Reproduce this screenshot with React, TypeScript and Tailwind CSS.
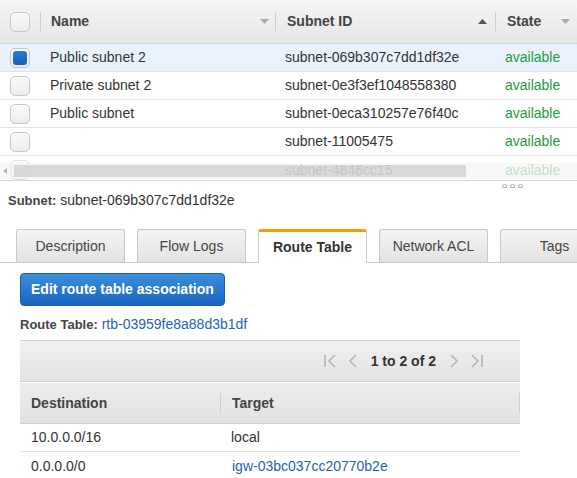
import React from "react";

const font = { fontFamily: '"Liberation Sans", Arial, sans-serif' };

function Checkbox({ checked }: { checked?: boolean }) {
  return (
    <div className="w-[20px] h-[20px] rounded-[5px] border border-[#c6c6c6] bg-gradient-to-b from-[#fbfbfb] to-[#ececec] flex items-center justify-center">
      {checked && <div className="w-[14px] h-[14px] rounded-[3px] bg-gradient-to-b from-[#2b7bd6] to-[#1560b8]" />}
    </div>
  );
}

const subnets = [
  { name: "Public subnet 2", id: "subnet-069b307c7dd1df32e", checked: true },
  { name: "Private subnet 2", id: "subnet-0e3f3ef1048558380" },
  { name: "Public subnet", id: "subnet-0eca310257e76f40c" },
  { name: "", id: "subnet-11005475" },
];

function HeaderDivider() {
  return <div className="w-px h-[20px] bg-[#d0d0d0]" />;
}

function Caret({ up }: { up?: boolean }) {
  return (
    <svg width="9" height="5" viewBox="0 0 9 5">
      {up ? <path d="M0 5 L4.5 0 L9 5 Z" fill="#555" /> : <path d="M0 0 L9 0 L4.5 5 Z" fill="#aaa" />}
    </svg>
  );
}

function TopTable() {
  return (
    <div className="relative h-[181px] overflow-hidden border-b border-[#d5d5d5]">
      <div className="h-[44px] flex items-center bg-gradient-to-b from-[#f6f6f6] to-[#e6e6e6] border-b border-[#d2d2d2] text-[14px] font-bold text-[#444]">
        <div className="w-[40px] flex items-center pl-[10px] h-full">
          <Checkbox />
        </div>
        <HeaderDivider />
        <div className="w-[234px] flex items-center justify-between pl-[10px] pr-[6px]">
          <span>Name</span>
          <Caret />
        </div>
        <HeaderDivider />
        <div className="w-[219px] flex items-center justify-between pl-[11px] pr-[8px]">
          <span>Subnet ID</span>
          <Caret up />
        </div>
        <HeaderDivider />
        <div className="flex-1 flex items-center justify-between pl-[11px] pr-[7px]">
          <span>State</span>
          <Caret />
        </div>
      </div>
      {subnets.map((s) => (
        <div
          key={s.id}
          className={`h-[28px] flex items-center border-b border-[#e4e4e4] text-[14px] text-[#333] ${s.checked ? "bg-[#eaf3fd]" : "bg-white"}`}
        >
          <div className="w-[41px] pl-[10px]">
            <Checkbox checked={s.checked} />
          </div>
          <div className="w-[235px] pl-[9px]">{s.name}</div>
          <div className="w-[220px] pl-[9px]">{s.id}</div>
          <div className="flex-1 pl-[9px] text-[#1e9c3c]">available</div>
        </div>
      ))}
      <div className="h-[28px] flex items-center text-[14px] text-[#333] opacity-50">
        <div className="w-[41px] pl-[10px]">
          <Checkbox />
        </div>
        <div className="w-[235px] pl-[9px]"></div>
        <div className="w-[220px] pl-[9px]">subnet-4846cc15</div>
        <div className="flex-1 pl-[9px] text-[#1e9c3c]">available</div>
      </div>
      <div className="absolute left-0 right-0 top-[163px] h-[16px] bg-[#f1f1f1]/50 flex items-center">
        <svg width="14" height="16" viewBox="0 0 14 16">
          <path d="M7 5 L3 8 L7 11 Z" fill="#b5b5b5" />
        </svg>
        <div className="w-[452px] h-[12px] bg-[#c4c4c4]/60" />
      </div>
    </div>
  );
}

function Pager() {
  return (
    <div className="flex items-center gap-[11px] text-[14px] font-bold text-[#333]">
      <svg width="14" height="16" viewBox="0 0 14 16" fill="none" stroke="#b3b3b3" strokeWidth="1.6">
        <path d="M2 2 V14" />
        <path d="M12 2 L6 8 L12 14" />
      </svg>
      <svg width="10" height="16" viewBox="0 0 10 16" fill="none" stroke="#b3b3b3" strokeWidth="1.6">
        <path d="M8 2 L2 8 L8 14" />
      </svg>
      <span className="mx-[2px]">1 to 2 of 2</span>
      <svg width="10" height="16" viewBox="0 0 10 16" fill="none" stroke="#b3b3b3" strokeWidth="1.6">
        <path d="M2 2 L8 8 L2 14" />
      </svg>
      <svg width="14" height="16" viewBox="0 0 14 16" fill="none" stroke="#b3b3b3" strokeWidth="1.6">
        <path d="M2 2 L8 8 L2 14" />
        <path d="M12 2 V14" />
      </svg>
    </div>
  );
}

const tabs = ["Description", "Flow Logs", "Route Table", "Network ACL", "Tags"];

export default function App() {
  return (
    <div className="w-[577px] h-[478px] overflow-hidden bg-white text-[#333]" style={font}>
      <TopTable />
      <div className="relative h-[11px]">
        <div className="absolute left-[502px] top-[3px] flex gap-[3px]">
          <div className="w-[5px] h-[4px] rounded-t-full border border-[#aaa]" />
          <div className="w-[5px] h-[4px] rounded-t-full border border-[#aaa]" />
          <div className="w-[5px] h-[4px] rounded-t-full border border-[#aaa]" />
        </div>
      </div>
      <div className="pl-[8px] text-[14px] h-[16px] leading-[16px]">
        <span className="font-bold text-[#444] text-[13px]">Subnet:</span> subnet-069b307c7dd1df32e
      </div>
      <div className="mt-[21px] flex items-end gap-[12px] pl-[16px] border-b border-[#c8c8c8] h-[34px]">
        {tabs.map((t) => {
          const active = t === "Route Table";
          return (
            <div
              key={t}
              className={
                active
                  ? "w-[109px] h-[34px] -mb-px bg-white border border-[#c8c8c8] border-b-white border-t-[3px] border-t-[#f90] rounded-t-[3px] flex items-center justify-center text-[14px] font-bold text-[#333] shrink-0"
                  : "w-[109px] h-[33px] bg-gradient-to-b from-[#f4f4f4] to-[#e3e3e3] border border-[#c8c8c8] border-b-0 rounded-t-[3px] flex items-center justify-center text-[14px] text-[#444] shrink-0"
              }
            >
              {t}
            </div>
          );
        })}
      </div>
      <div className="pl-[20px]">
        <button className="mt-[10px] h-[33px] px-[10px] rounded-[4px] border border-[#1a5ea8] bg-gradient-to-b from-[#3a8fde] to-[#1a64bf] text-white text-[14px] font-bold">
          Edit route table association
        </button>
        <div className="mt-[10px] text-[14px] h-[16px] leading-[16px]">
          <span className="font-bold text-[#444] text-[13px]">Route Table:</span>{" "}
          <span className="text-[#1e64b4]">rtb-03959fe8a88d3b1df</span>
        </div>
        <div className="mt-[8px] w-[500px] border-t border-[#cfcfcf]">
          <div className="h-[41px] bg-gradient-to-b from-[#f1f1f1] to-[#e2e2e2] border-b border-[#cfcfcf] flex items-center justify-end pr-[36px]">
            <Pager />
          </div>
          <div className="h-[41px] mt-px bg-gradient-to-b from-[#eeeeee] to-[#e1e1e1] border-b border-[#cfcfcf] flex items-center text-[14px] font-bold text-[#444]">
            <div className="w-[200px] pl-[11px]">Destination</div>
            <HeaderDivider />
            <div className="flex-1 pl-[11px]">Target</div>
            <HeaderDivider />
          </div>
          <div className="h-[28px] flex items-center border-b border-[#e0e0e0] text-[14px] text-[#333]">
            <div className="w-[201px] pl-[11px]">10.0.0.0/16</div>
            <div className="flex-1 pl-[10px]">local</div>
          </div>
          <div className="h-[28px] flex items-center text-[14px] text-[#333]">
            <div className="w-[201px] pl-[11px]">0.0.0.0/0</div>
            <div className="flex-1 pl-[11px] text-[#1e64b4]">igw-03bc037cc20770b2e</div>
          </div>
        </div>
      </div>
    </div>
  );
}
